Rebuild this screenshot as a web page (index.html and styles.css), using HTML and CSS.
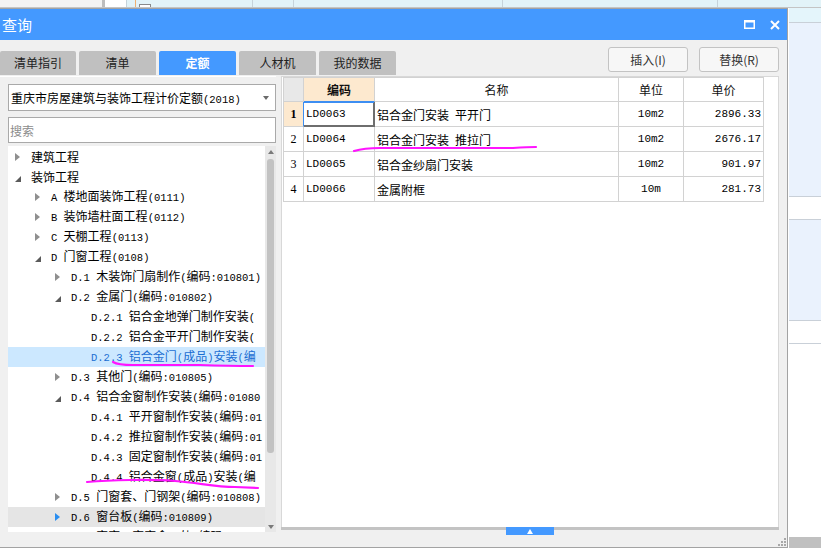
FILE: index.html
```html
<!DOCTYPE html>
<html lang="zh-CN">
<head>
<meta charset="utf-8">
<title>查询</title>
<link rel="stylesheet" href="styles.css">
</head>
<body>
<div class="backdrop">
  <div class="sheet-head">
    <div class="sc sc1"></div>
    <div class="sc sc2"></div>
    <div class="sc sc3"></div>
    <div class="sc sc4"><span class="mark"></span><span class="chk"></span></div>
    <div class="sc sc5"></div>
    <div class="sc sc6"></div>
    <div class="sc sc7"></div>
    <div class="sc sc8"></div>
  </div>
  <div class="sheet-body">
    <div class="under"></div>
    <div class="side">
      <div class="st st0"></div>
      <div class="st st1"></div>
      <div class="st st2"></div>
      <div class="st st3"></div>
      <div class="st st4"></div>
      <div class="st st5"></div>
      <div class="st st6"></div>
      <div class="st st7"></div>
    </div>
  </div>
</div>

<div class="dialog">
  <div class="titlebar">
    <span class="title">查询</span>
    <svg class="wbtn wbtn-max" width="11" height="9" viewBox="0 0 11 9"><rect x="0.75" y="1" width="9.5" height="7.25" fill="none" stroke="#fff" stroke-width="1.5"/><rect x="0" y="0" width="11" height="2.5" fill="#fff"/></svg>
    <svg class="wbtn" width="10" height="10" viewBox="0 0 10 10"><path d="M1 1L9 9M9 1L1 9" stroke="#fff" stroke-width="2"/></svg>
  </div>

  <div class="toolbar">
    <div class="tabs">
      <div class="tab">清单指引</div>
      <div class="tab">清单</div>
      <div class="tab on">定额</div>
      <div class="tab">人材机</div>
      <div class="tab">我的数据</div>
    </div>
    <div class="actions">
      <button class="btn">插入(I)</button>
      <button class="btn">替换(R)</button>
    </div>
  </div>

  <div class="main">
    <div class="pane">
      <div class="combo"><span class="combo-text">重庆市房屋建筑与装饰工程计价定额<span class="k">(2018)</span></span><span class="caret"></span></div>
      <input class="search" type="text" placeholder="搜索">
      <div class="tree">
        <ul class="tree-list">
          <li class="node l0"><i class="tw tw-c"></i><span class="lb">建筑工程</span></li>
          <li class="node l0"><i class="tw tw-e"></i><span class="lb">装饰工程</span></li>
          <li class="node l1"><i class="tw tw-c"></i><span class="lb"><span class="k">A </span>楼地面装饰工程<span class="k">(0111)</span></span></li>
          <li class="node l1"><i class="tw tw-c"></i><span class="lb"><span class="k">B </span>装饰墙柱面工程<span class="k">(0112)</span></span></li>
          <li class="node l1"><i class="tw tw-c"></i><span class="lb"><span class="k">C </span>天棚工程<span class="k">(0113)</span></span></li>
          <li class="node l1"><i class="tw tw-e"></i><span class="lb"><span class="k">D </span>门窗工程<span class="k">(0108)</span></span></li>
          <li class="node l2"><i class="tw tw-c"></i><span class="lb"><span class="k">D.1 </span>木装饰门扇制作<span class="k">(</span>编码<span class="k">:010801)</span></span></li>
          <li class="node l2"><i class="tw tw-e"></i><span class="lb"><span class="k">D.2 </span>金属门<span class="k">(</span>编码<span class="k">:010802)</span></span></li>
          <li class="node l3"><i class="tw"></i><span class="lb"><span class="k">D.2.1 </span>铝合金地弹门制作安装<span class="k">(</span></span></li>
          <li class="node l3"><i class="tw"></i><span class="lb"><span class="k">D.2.2 </span>铝合金平开门制作安装<span class="k">(</span></span></li>
          <li class="node l3 sel"><i class="tw"></i><span class="lb"><span class="k">D.2.3 </span>铝合金门<span class="k">(</span>成品<span class="k">)</span>安装<span class="k">(</span>编</span></li>
          <li class="node l2"><i class="tw tw-c"></i><span class="lb"><span class="k">D.3 </span>其他门<span class="k">(</span>编码<span class="k">:010805)</span></span></li>
          <li class="node l2"><i class="tw tw-e"></i><span class="lb"><span class="k">D.4 </span>铝合金窗制作安装<span class="k">(</span>编码<span class="k">:01080</span></span></li>
          <li class="node l3"><i class="tw"></i><span class="lb"><span class="k">D.4.1 </span>平开窗制作安装<span class="k">(</span>编码<span class="k">:01</span></span></li>
          <li class="node l3"><i class="tw"></i><span class="lb"><span class="k">D.4.2 </span>推拉窗制作安装<span class="k">(</span>编码<span class="k">:01</span></span></li>
          <li class="node l3"><i class="tw"></i><span class="lb"><span class="k">D.4.3 </span>固定窗制作安装<span class="k">(</span>编码<span class="k">:01</span></span></li>
          <li class="node l3"><i class="tw"></i><span class="lb"><span class="k">D.4.4 </span>铝合金窗<span class="k">(</span>成品<span class="k">)</span>安装<span class="k">(</span>编</span></li>
          <li class="node l2"><i class="tw tw-c"></i><span class="lb"><span class="k">D.5 </span>门窗套、门钢架<span class="k">(</span>编码<span class="k">:010808)</span></span></li>
          <li class="node l2 hov"><i class="tw tw-c"></i><span class="lb"><span class="k">D.6 </span>窗台板<span class="k">(</span>编码<span class="k">:010809)</span></span></li>
          <li class="node l2"><i class="tw tw-c"></i><span class="lb"><span class="k">D.7 </span>窗帘、窗帘盒、轨<span class="k">(</span>编码<span class="k">:01081</span></span></li>
        </ul>
        <div class="vscroll">
          <span class="arr-up"></span>
          <span class="thumb"></span>
          <span class="arr-dn"></span>
        </div>
      </div>
    </div>

    <div class="right">
      <div class="grid">
        <table class="tbl">
          <colgroup>
            <col class="c-rn"><col class="c-code"><col class="c-name"><col class="c-unit"><col class="c-price">
          </colgroup>
          <thead>
            <tr><th class="rn"></th><th class="hl">编码</th><th>名称</th><th>单位</th><th>单价</th></tr>
          </thead>
          <tbody>
            <tr><td class="rn hl cur">1</td><td class="k focus">LD0063</td><td>铝合金门安装&ensp;平开门</td><td class="k unit">10m2</td><td class="k price">2896.33</td></tr>
            <tr><td class="rn">2</td><td class="k">LD0064</td><td>铝合金门安装&ensp;推拉门</td><td class="k unit">10m2</td><td class="k price">2676.17</td></tr>
            <tr><td class="rn">3</td><td class="k">LD0065</td><td>铝合金纱扇门安装</td><td class="k unit">10m2</td><td class="k price">901.97</td></tr>
            <tr><td class="rn">4</td><td class="k">LD0066</td><td>金属附框</td><td class="k unit">10m</td><td class="k price">281.73</td></tr>
          </tbody>
        </table>
      </div>
      <div class="split"><span class="split-tab"></span></div>
      <div class="foot"></div>
    </div>
  </div>

  <svg class="grip" width="8" height="8" viewBox="0 0 8 8"><g fill="#a8a8a8"><rect x="6" y="0" width="2" height="2"/><rect x="3" y="3" width="2" height="2"/><rect x="6" y="3" width="2" height="2"/><rect x="0" y="6" width="2" height="2"/><rect x="3" y="6" width="2" height="2"/><rect x="6" y="6" width="2" height="2"/></g></svg>
</div>

<svg class="ink" width="821" height="550" viewBox="0 0 821 550">
  <g fill="none" stroke="#ff14ff" stroke-width="2.2" stroke-linecap="round" stroke-linejoin="round">
    <path d="M354 151 Q364 148 380 148 L513 148 Q528 147 536 147"/>
    <path d="M113 362 Q118 365 133 365 L200 365 Q230 366 253 366"/>
    <path d="M87 482 C110 480 150 479 175 481 S215 487 235 487 L258 488"/>
  </g>
</svg>
</body>
</html>
```

FILE: styles.css
```css
* { box-sizing: border-box; margin: 0; padding: 0; }

body {
  width: 821px;
  height: 550px;
  overflow: hidden;
  position: relative;
  background: #fff;
  font-family: "Noto Sans CJK SC", "Noto Sans", sans-serif;
  font-size: 12px;
  color: #000;
}

/* ---------- application behind the dialog ---------- */
.backdrop { display: flex; flex-direction: column; height: 550px; }

.sheet-head {
  flex: none;
  display: flex;
  height: 8px;
  background: #e2f3f8;
  border-bottom: 1px solid #c4c4c4;
}
.sc { height: 100%; border-right: 1px solid #c6d3da; }
.sc1 { width: 102px; background: #f3f3f3; border-right: none; }
.sc2 { width: 3px; background: #bdbdbd; border-right: none; }
.sc3 { width: 22px; background: #fff; }
.sc4 { width: 126px; display: flex; }
.mark { width: 1px; margin-left: 8px; background: #f0b070; }
.chk { width: 12px; height: 3px; margin: 4px 0 0 3px; border: 1px solid #8a8a8a; border-bottom: none; background: #fff; }
.sc5 { width: 41px; }
.sc6 { width: 209px; }
.sc7 { width: 215px; }
.sc8 { flex: 1; border-right: none; }

.sheet-body { flex: 1; display: flex; }
.under { width: 789px; }
.side { flex: 1; display: flex; flex-direction: column; }
.st { border-bottom: 1px solid #c9d0d8; }
.st0 { height: 15px; background: #e4f5fb; }
.st1 { height: 174px; background: #eaf2fd; }
.st2 { height: 23px; background: #fff; }
.st3 { height: 101px; background: #eaf2fd; }
.st4 { height: 23px; background: #fff; }
.st5 { flex: 1; background: #fff; border-bottom: none; }
.st6 { height: 11px; background: #c0c0c0; border-bottom: none; }
.st7 { height: 2px; background: #fff; border-bottom: none; }

/* ---------- dialog window ---------- */
.dialog {
  position: absolute;
  left: -1px;
  top: 8px;
  width: 789px;
  height: 540px;
  border: 1px solid #a3a3a3;
  background: #f0f0f0;
  display: flex;
  flex-direction: column;
}

.titlebar {
  flex: none;
  height: 31px;
  background: #4499ff;
  color: #fff;
  display: flex;
  align-items: center;
  padding: 0 7px 0 2px;
}
.title { flex: 1; font-size: 15px; line-height: 31px; }
.wbtn { display: block; }
.wbtn-max { margin-right: 15px; }

.toolbar { flex: none; height: 36px; display: flex; }
.tabs { display: flex; gap: 3px; margin-top: 11px; height: 24px; }
.tab {
  width: 77px;
  height: 24px;
  line-height: 24px;
  text-align: center;
  background: #c0c0c0;
  color: #222;
  border-radius: 2px 2px 0 0;
}
.tab:first-child { width: 76px; }
.tab.on { background: #4499ff; color: #fff; font-weight: bold; }

.actions { margin-left: auto; margin-top: 7px; margin-right: 8px; display: flex; gap: 11px; height: 25px; }
.btn {
  width: 80px;
  height: 25px;
  border: 1px solid #c3c3c3;
  border-radius: 3px;
  background: #f7f7f7;
  font: inherit;
  color: #333;
}

.main { flex: 1; display: flex; min-height: 0; }

/* ---------- left pane ---------- */
.pane {
  width: 276px;
  border-top: 1px solid #fff;
  padding: 7px 0 0 8px;
  display: flex;
  flex-direction: column;
}
.combo {
  flex: none;
  height: 27px;
  border: 1px solid #a9a9a9;
  background: #fff;
  display: flex;
  align-items: center;
  padding: 0 6px 0 2px;
  white-space: nowrap;
}
.combo-text { flex: 1; }
.caret { border-top: 4px solid #6a6a6a; border-left: 3px solid transparent; border-right: 3px solid transparent; }

.search {
  flex: none;
  margin-top: 6px;
  height: 26px;
  border: 1px solid #a9a9a9;
  background: #fff;
  padding: 0 1px;
  font: inherit;
  outline: none;
}
.search::placeholder { color: #8c8c8c; }

.tree { flex: none; margin-top: 3px; height: 386px; background: #fff; display: flex; }
.tree-list { flex: 1; list-style: none; overflow: hidden; padding-top: 1px; }
.node {
  height: 20px;
  line-height: 20px;
  white-space: nowrap;
  display: flex;
  align-items: center;
  padding-left: 6px;
}
.l1 { padding-left: 26px; }
.l2 { padding-left: 46px; }
.l3 { padding-left: 66px; }
.lb { white-space: pre; }
.tw { flex: none; width: 17px; height: 20px; display: flex; align-items: center; }
.tw-c::before {
  content: "";
  margin-left: 1px;
  border-left: 5px solid #8f8f8f;
  border-top: 4px solid transparent;
  border-bottom: 4px solid transparent;
}
.tw-e::before {
  content: "";
  margin: 4px 0 0 1px;
  border-bottom: 6px solid #5a5a5a;
  border-left: 6px solid transparent;
}
.node.sel { background: #cce8ff; color: #1b6ed2; }
.node.hov { background: #e5e5e5; }
.node.hov .tw-c::before { border-left-color: #2a8ef0; }

.k { font-family: "Liberation Mono", monospace; font-size: 10.5px; }

.vscroll { flex: none; width: 11px; background: #e8e8e8; display: flex; flex-direction: column; align-items: center; }
.arr-up { margin-top: 4px; border-bottom: 4px solid #7a7a7a; border-left: 3px solid transparent; border-right: 3px solid transparent; }
.thumb { margin-top: 5px; width: 7px; height: 294px; border-radius: 3px; background: #c2c2c2; }
.arr-dn { margin-top: auto; margin-bottom: 3px; border-top: 4px solid #7a7a7a; border-left: 3px solid transparent; border-right: 3px solid transparent; }

/* ---------- right pane ---------- */
.right { margin-left: 5px; width: 498px; display: flex; flex-direction: column; }
.grid { flex: 1; background: #fff; border: 1px solid #d8d8d8; border-bottom: none; padding-left: 1px; }
.split {
  flex: none;
  height: 8px;
  display: flex;
  justify-content: center;
  background: linear-gradient(#c3c3c3 0, #c3c3c3 3px, transparent 3px);
}
.split-tab { width: 48px; height: 8px; background: #4499ff; display: flex; justify-content: center; align-items: center; }
.split-tab::before { content: ""; border-bottom: 5px solid #fff; border-left: 3px solid transparent; border-right: 3px solid transparent; }
.foot { flex: none; height: 12px; }

.tbl {
  border-collapse: separate;
  border-spacing: 0;
  table-layout: fixed;
  width: 481px;
  border-top: 1px solid #d2d2d2;
  border-left: 1px solid #d2d2d2;
}
.c-rn { width: 20px; }
.c-code { width: 71px; }
.c-name { width: 244px; }
.c-unit { width: 65px; }
.c-price { width: 80px; }
.tbl th, .tbl td {
  border-right: 1px solid #d2d2d2;
  border-bottom: 1px solid #d2d2d2;
  padding: 0 2px;
  white-space: nowrap;
  overflow: hidden;
  vertical-align: middle;
}
.tbl th { height: 24px; font-weight: normal; text-align: center; color: #111; }
.tbl td { height: 25px; }
.tbl td.k { font-size: 11px; }
.tbl .rn { text-align: center; font-family: "Liberation Serif", serif; font-size: 12px; padding: 0; }
.tbl th.rn { background: #e8e8e8; }
.tbl .hl { background: #fde9cf; font-weight: bold; }
.tbl th.hl { border-bottom-color: #3d8ef2; }
.tbl td.cur { border-right-color: #3d8ef2; }
.tbl td.focus {
  border-right: 1px solid #6e6e6e;
  border-bottom: 1px solid #6e6e6e;
  box-shadow: inset 0 1px 0 #3d8ef2, inset -1px -1px 0 #6e6e6e;
}
.tbl .unit { text-align: center; }
.tbl .price { text-align: right; }

.grip { position: absolute; right: 1px; bottom: 1px; }

/* hand-drawn annotation strokes over the screenshot */
.ink { position: absolute; left: 0; top: 0; pointer-events: none; }
```
